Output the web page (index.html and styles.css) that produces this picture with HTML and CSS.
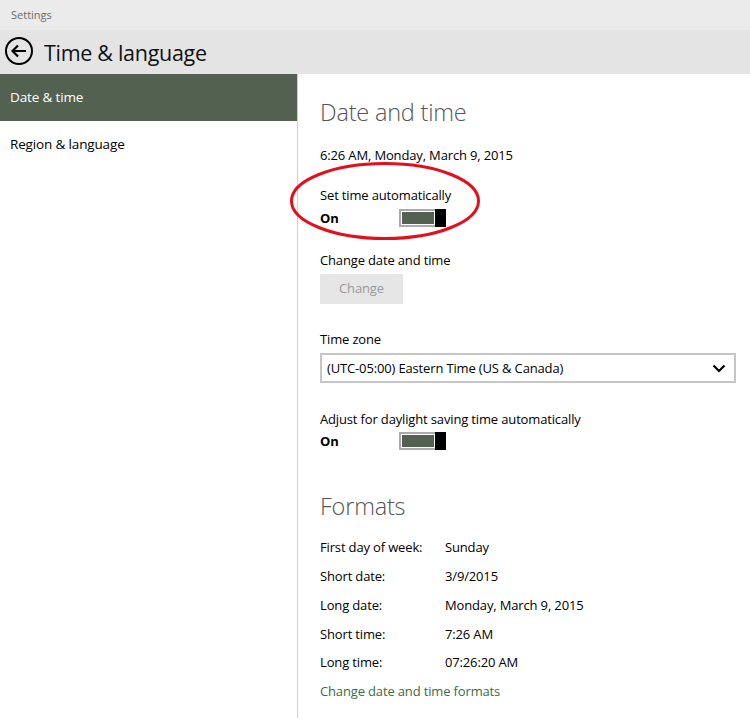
FILE: index.html
```html
<!DOCTYPE html>
<html>
<head>
<meta charset="utf-8">
<link rel="stylesheet" href="styles.css">
</head>
<body>
<div class="titlebar">Settings</div>
<div class="header">
  <svg class="back" width="30" height="30" viewBox="0 0 30 30">
    <circle cx="15" cy="15" r="13" fill="none" stroke="#000" stroke-width="2"/>
    <path d="M22 15H8.5M14 9.5L8.5 15L14 20.5" fill="none" stroke="#000" stroke-width="2.2"/>
  </svg>
  <span class="title">Time &amp; language</span>
</div>
<div class="main">
  <nav class="nav">
    <div class="nav-item active">Date &amp; time</div>
    <div class="nav-item">Region &amp; language</div>
  </nav>
  <section class="content">
    <h1 class="heading">Date and time</h1>
    <div class="line now">6:26 AM, Monday, March 9, 2015</div>
    <div class="line label-auto">Set time automatically</div>
    <div class="toggle-row">
      <span class="on">On</span>
      <span class="toggle"><span class="toggle-track"><span class="toggle-fill"></span></span><span class="toggle-thumb"></span></span>
    </div>
    <div class="line label-change">Change date and time</div>
    <div class="btn">Change</div>
    <div class="line label-tz">Time zone</div>
    <div class="select">
      <span>(UTC-05:00) Eastern Time (US &amp; Canada)</span>
      <svg class="chev" width="14" height="9" viewBox="0 0 14 9"><path d="M1.5 1.5L7 7L12.5 1.5" fill="none" stroke="#000" stroke-width="2.2"/></svg>
    </div>
    <div class="line label-dst">Adjust for daylight saving time automatically</div>
    <div class="toggle-row dst">
      <span class="on">On</span>
      <span class="toggle"><span class="toggle-track"><span class="toggle-fill"></span></span><span class="toggle-thumb"></span></span>
    </div>
    <h1 class="heading formats">Formats</h1>
    <div class="grid">
      <span>First day of week:</span><span>Sunday</span>
      <span>Short date:</span><span>3/9/2015</span>
      <span>Long date:</span><span>Monday, March 9, 2015</span>
      <span>Short time:</span><span>7:26 AM</span>
      <span>Long time:</span><span>07:26:20 AM</span>
    </div>
    <div class="link">Change date and time formats</div>
    <svg class="annot" width="196" height="82" viewBox="0 0 196 82">
      <ellipse cx="98" cy="41" rx="93.5" ry="37.5" fill="none" stroke="#e3101b" stroke-width="3"/>
    </svg>
  </section>
</div>
</body>
</html>
```

FILE: styles.css
```css
html, body {
  margin: 0;
  padding: 0;
  background: #fff;
}
body {
  font-family: "Open Sans", "Noto Sans", sans-serif;
  font-size: 13px;
  letter-spacing: -0.15px;
  color: #000;
  width: 750px;
  height: 718px;
  overflow: hidden;
}
.titlebar {
  height: 30px;
  background: #ebebeb;
  color: #6a6a6a;
  font-size: 11px;
  letter-spacing: 0;
  line-height: 29px;
  padding-left: 11px;
}
.header {
  height: 44px;
  background: #e4e4e4;
  display: flex;
  align-items: center;
}
.back {
  margin-left: 4px;
  margin-top: -2px;
}
.title {
  margin-left: 10px;
  font-size: 21.5px;
  font-weight: 400;
  color: #111;
  letter-spacing: -0.3px;
}
.main {
  display: flex;
  height: 644px;
}
.nav {
  width: 297px;
  border-right: 1px solid #cfcfcf;
  flex: none;
}
.nav-item {
  height: 47px;
  line-height: 47px;
  padding-left: 10px;
  font-size: 13.5px;
}
.nav-item.active {
  background: #536151;
  color: #fff;
}
.content {
  position: relative;
  flex: 1;
  padding-left: 22px;
}
.heading {
  margin: 22px 0 0;
  font-size: 23.5px;
  font-weight: 300;
  line-height: 32px;
  letter-spacing: -0.2px;
  color: #555;
}
.line {
  line-height: 20px;
  height: 20px;
}
.now { margin-top: 17px; }
.label-auto { margin-top: 20px; }
.toggle-row {
  display: flex;
  align-items: center;
  height: 20px;
  margin-top: 3px;
}
.toggle-row.dst { margin-top: 2px; }
.on {
  width: 79px;
  font-weight: 700;
}
.toggle {
  display: flex;
  width: 47px;
  height: 18px;
}
.toggle-track {
  flex: 1;
  border: 2px solid #ababab;
  border-right: none;
  padding: 1px;
  background: #fff;
  display: flex;
}
.toggle-fill {
  flex: 1;
  background: #536151;
}
.toggle-thumb {
  width: 11px;
  background: #000;
}
.label-change { margin-top: 22px; }
.btn {
  margin-top: 4px;
  width: 83px;
  height: 30px;
  line-height: 29px;
  background: #e6e6e6;
  color: #9a9a9a;
  text-align: center;
}
.label-tz { margin-top: 25px; }
.select {
  margin-top: 4px;
  width: 416px;
  height: 30px;
  box-sizing: border-box;
  border: 2px solid #c6c6c6;
  display: flex;
  align-items: center;
  justify-content: space-between;
  padding: 0 8px 0 5px;
}
.chev { margin-top: 1px; }
.label-dst { margin-top: 26px; }
.heading.formats { margin-top: 39px; }
.grid {
  margin-top: 11px;
  display: grid;
  grid-template-columns: 125px auto;
  grid-auto-rows: 28.75px;
  align-items: center;
}
.link {
  height: 28px;
  line-height: 28px;
  color: #3d6b46;
}
.annot {
  position: absolute;
  left: -11px;
  top: 86px;
}
```
